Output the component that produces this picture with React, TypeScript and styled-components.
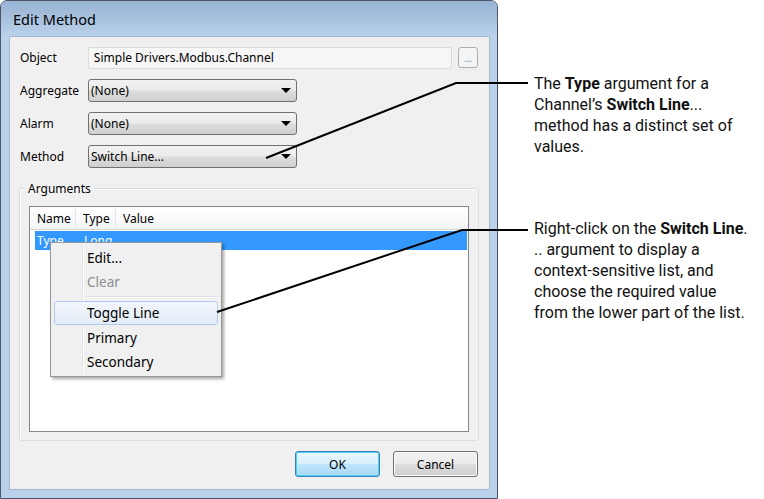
import styled, { createGlobalStyle } from 'styled-components';

const GlobalStyle = createGlobalStyle`
  html, body {
    margin: 0;
    padding: 0;
    background: #ffffff;
  }
  body {
    font-family: 'Noto Sans', 'Open Sans', sans-serif;
  }
`;

const Page = styled.div`
  position: relative;
  display: flex;
  align-items: flex-start;
  width: 764px;
  height: 499px;
  overflow: hidden;
`;

const Window = styled.div`
  width: 496px;
  height: 497px;
  border: 1px solid #4a5668;
  border-radius: 7px 7px 0 0;
  background: #b9d1ea;
  display: flex;
  flex-direction: column;
  flex-shrink: 0;
`;

const TitleBar = styled.div`
  height: 35px;
  padding-left: 12px;
  display: flex;
  align-items: center;
  font-size: 14.5px;
  color: #000;
  border-radius: 6px 6px 0 0;
  background: linear-gradient(#97b2d2, #b9d1ea);
`;

const Client = styled.div`
  position: relative;
  margin: 0 7px 8px 8px;
  flex: 1;
  background: #f0f0f0;
  border: 1px solid #a4b7cc;
  padding: 9px 11px 0 9px;
  display: flex;
  flex-direction: column;
  font-size: 12px;
  color: #000;
`;

const FieldRow = styled.div`
  display: flex;
  align-items: center;
  height: 23px;
  margin-bottom: 10px;
`;

const Label = styled.div`
  width: 69px;
  padding-left: 1px;
  box-sizing: border-box;
`;

const ReadOnlyBox = styled.div`
  width: 358px;
  height: 20px;
  padding-left: 5px;
  display: flex;
  align-items: center;
  background: #f6f6f6;
  border: 1px solid #dadada;
  border-radius: 2px;
`;

const DotsButton = styled.div`
  width: 18px;
  height: 19px;
  margin-left: 6px;
  border: 1px solid #adadad;
  border-radius: 3px;
  background: #f4f4f4;
  color: #7f9ec4;
  font-size: 11px;
  display: flex;
  align-items: center;
  justify-content: center;
  letter-spacing: -0.5px;
`;

const Select = styled.div`
  position: relative;
  width: 205px;
  height: 21px;
  padding-left: 2px;
  display: flex;
  align-items: center;
  border: 1px solid #707070;
  border-radius: 3px;
  background: linear-gradient(#f2f2f2 0%, #ebebeb 48%, #dddddd 52%, #cfcfcf 100%);
`;

const Arrow = styled.span`
  position: absolute;
  right: 5px;
  top: 8px;
  width: 0;
  height: 0;
  border-left: 5px solid transparent;
  border-right: 5px solid transparent;
  border-top: 5px solid #000;
`;

const GroupBox = styled.fieldset`
  margin: 2px 0 0 0;
  padding: 9px 9px 8px 9px;
  width: 440px;
  border: 1px solid #d5dfe5;
  border-radius: 3px;
  box-shadow: inset 1px 1px 0 #fff;
  legend {
    padding: 0 2px;
    margin-left: -3px;
    font-size: 12px;
  }
`;

const ListView = styled.div`
  position: relative;
  height: 224px;
  border: 1px solid #828790;
  background: #fff;
`;

const Header = styled.div`
  display: flex;
  height: 22px;
  border-bottom: 1px solid #d5d5d5;
  background: linear-gradient(#ffffff, #f3f4f6);
`;

const HeaderCell = styled.div<{ $w?: number }>`
  width: ${(p) => (p.$w ? `${p.$w}px` : 'auto')};
  flex: ${(p) => (p.$w ? 'none' : '1')};
  padding-left: 7px;
  display: flex;
  align-items: center;
  border-right: ${(p) => (p.$w ? '1px solid #e3e5e8' : 'none')};
`;

const Row = styled.div<{ $selected?: boolean }>`
  display: flex;
  height: 19px;
  margin: 1px 0 0 5px;
  width: 432px;
  background: ${(p) => (p.$selected ? '#3399ff' : 'transparent')};
  color: ${(p) => (p.$selected ? '#fff' : '#000')};
`;

const Cell = styled.div<{ $w?: number }>`
  width: ${(p) => (p.$w ? `${p.$w}px` : 'auto')};
  padding-left: 2px;
  display: flex;
  align-items: center;
`;

const Menu = styled.div`
  position: absolute;
  left: 20px;
  top: 35px;
  width: 166px;
  padding: 3px 2px 2px 2px;
  border: 1px solid #979797;
  background: #f0f0f0;
  box-shadow: 2px 2px 3px rgba(0, 0, 0, 0.35);
  &::before {
    content: '';
    position: absolute;
    left: 31px;
    top: 2px;
    bottom: 2px;
    width: 1px;
    background: #e2e3e3;
    border-right: 1px solid #fff;
  }
`;

const MenuItem = styled.div<{ $disabled?: boolean; $hot?: boolean }>`
  position: relative;
  height: ${(p) => (p.$hot ? '22px' : '24px')};
  padding-left: ${(p) => (p.$hot ? '32px' : '34px')};
  display: flex;
  align-items: center;
  font-size: 13.5px;
  color: ${(p) => (p.$disabled ? '#8d8d8d' : '#000')};
  border: ${(p) => (p.$hot ? '1px solid #aeccef' : 'none')};
  border-radius: 3px;
  margin: ${(p) => (p.$hot ? '0 1px 1px 1px' : '0')};
  background: ${(p) => (p.$hot ? 'linear-gradient(#f2f6fb, #e3ecf7)' : 'transparent')};
`;

const Separator = styled.div`
  height: 1px;
  margin: 2px 0 3px 32px;
  background: #e0e0e0;
  border-bottom: 1px solid #fff;
`;

const Buttons = styled.div`
  display: flex;
  justify-content: flex-end;
  gap: 13px;
  margin-top: 10px;
`;

const Button = styled.div<{ $default?: boolean }>`
  width: 83px;
  height: 24px;
  display: flex;
  align-items: center;
  justify-content: center;
  border-radius: 3px;
  border: 1px solid ${(p) => (p.$default ? '#3c7fb1' : '#707070')};
  box-shadow: ${(p) => (p.$default ? 'inset 0 0 0 1px #48d2f8' : 'inset 0 0 0 1px #fbfbfb')};
  background: ${(p) =>
    p.$default
      ? 'linear-gradient(#eaf6fd 0%, #d9f0fc 48%, #bee6fd 52%, #a7d9f5 100%)'
      : 'linear-gradient(#f2f2f2 0%, #ebebeb 48%, #dddddd 52%, #cfcfcf 100%)'};
`;

const Notes = styled.div`
  display: flex;
  flex-direction: column;
  margin-left: 36px;
  padding-top: 73px;
  gap: 61px;
  width: 230px;
`;

const Note = styled.p`
  margin: 0;
  font-family: Roboto, 'Liberation Sans', sans-serif;
  font-size: 16px;
  line-height: 21px;
  color: #111;
  white-space: nowrap;
  b {
    font-weight: 700;
  }
`;

const Callouts = styled.svg`
  position: absolute;
  left: 0;
  top: 0;
  pointer-events: none;
`;

function Dropdown({ value }: { value: string }) {
  return (
    <Select>
      {value}
      <Arrow />
    </Select>
  );
}

export default function App() {
  return (
    <Page>
      <GlobalStyle />
      <Window>
        <TitleBar>Edit Method</TitleBar>
        <Client>
          <FieldRow>
            <Label>Object</Label>
            <ReadOnlyBox>Simple Drivers.Modbus.Channel</ReadOnlyBox>
            <DotsButton>...</DotsButton>
          </FieldRow>
          <FieldRow>
            <Label>Aggregate</Label>
            <Dropdown value="(None)" />
          </FieldRow>
          <FieldRow>
            <Label>Alarm</Label>
            <Dropdown value="(None)" />
          </FieldRow>
          <FieldRow>
            <Label>Method</Label>
            <Dropdown value="Switch Line..." />
          </FieldRow>
          <GroupBox>
            <legend>Arguments</legend>
            <ListView>
              <Header>
                <HeaderCell $w={38}>Name</HeaderCell>
                <HeaderCell $w={32}>Type</HeaderCell>
                <HeaderCell>Value</HeaderCell>
              </Header>
              <Row $selected>
                <Cell $w={45}>Type</Cell>
                <Cell>Long</Cell>
              </Row>
              <Menu>
                <MenuItem>Edit...</MenuItem>
                <MenuItem $disabled>Clear</MenuItem>
                <Separator />
                <MenuItem $hot>Toggle Line</MenuItem>
                <MenuItem>Primary</MenuItem>
                <MenuItem>Secondary</MenuItem>
              </Menu>
            </ListView>
          </GroupBox>
          <Buttons>
            <Button $default>OK</Button>
            <Button>Cancel</Button>
          </Buttons>
        </Client>
      </Window>
      <Notes>
        <Note>
          The <b>Type</b> argument for a
          <br />
          Channel’s <b>Switch Line</b>...
          <br />
          method has a distinct set of
          <br />
          values.
        </Note>
        <Note>
          Right-click on the <b>Switch Line</b>.
          <br />
          .. argument to display a
          <br />
          context-sensitive list, and
          <br />
          choose the required value
          <br />
          from the lower part of the list.
        </Note>
      </Notes>
      <Callouts width="764" height="499" viewBox="0 0 764 499">
        <polyline points="266,158 456,83 528,83" fill="none" stroke="#000" strokeWidth="2" />
        <polyline points="217,312 462,230 528,230" fill="none" stroke="#000" strokeWidth="2" />
      </Callouts>
    </Page>
  );
}
